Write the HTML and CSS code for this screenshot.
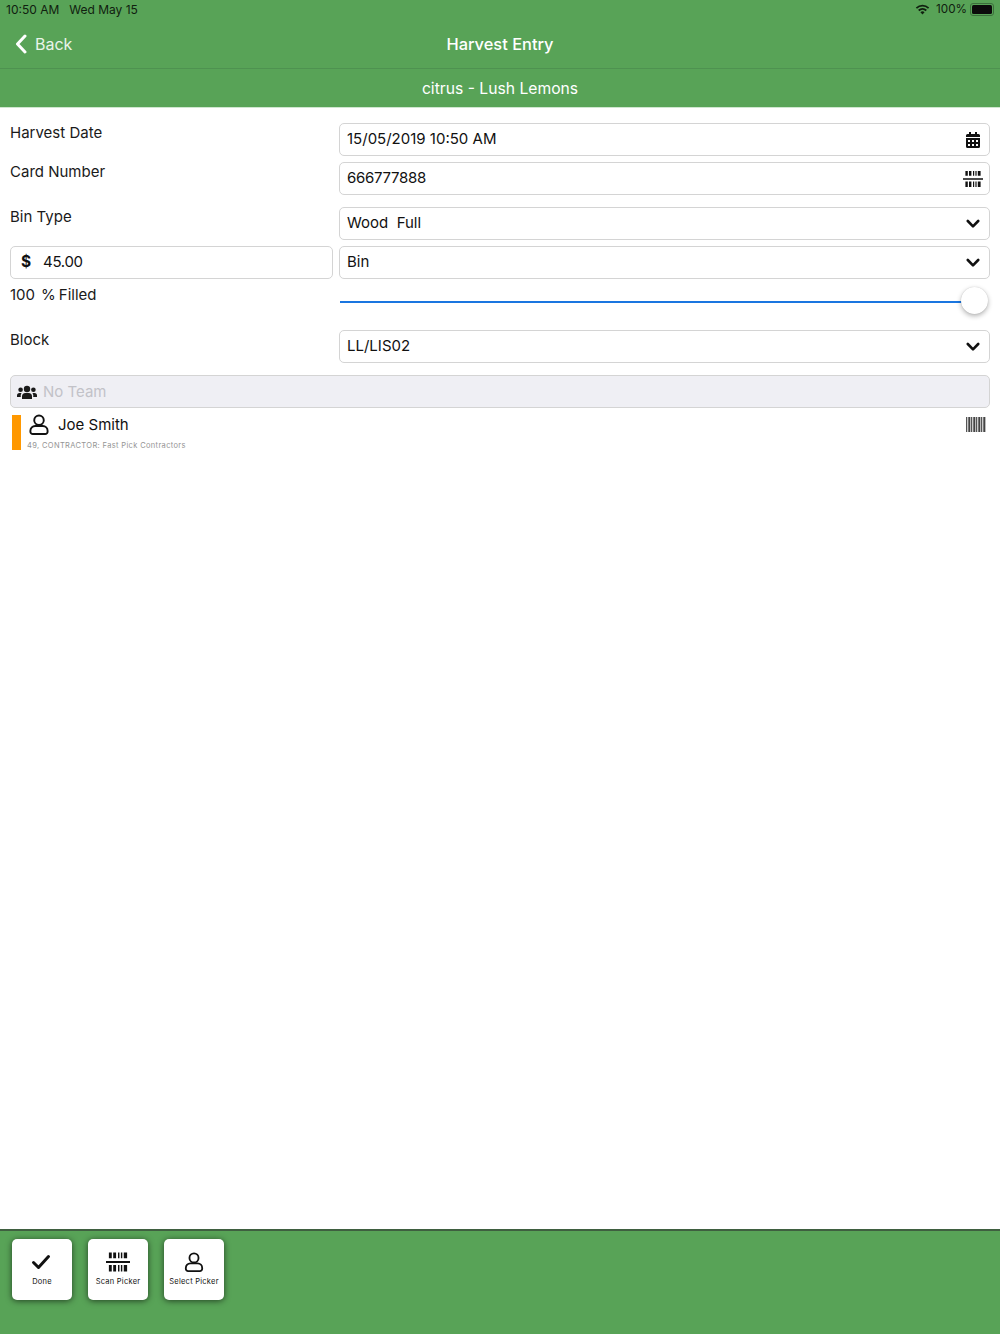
FILE: index.html
```html
<!doctype html>
<html lang="en">

<head>
  <meta charset="utf-8">
  <title>Harvest Entry</title>
  <meta name="viewport" content="width=device-width, initial-scale=1">
  <link rel="stylesheet" href="styles.css">
</head>

<body>
  <svg class="defs" width="0" height="0" aria-hidden="true">
    <symbol id="i-scan" viewBox="0 0 25 20">
      <path d="M3 0h3v6H3zM7.500 0h3v6h-3zM12.500 0H14v6h-1.500zM15.500 0H17v6h-1.500zM18.500 0H22v6h-3.500zM3 13h3v7H3zM7.500 13h3v7h-3zM12.500 13H14v7h-1.500zM15.500 13H17v7h-1.500zM18.500 13H22v7h-3.500zM0 9h25v2H0z"/>
    </symbol>
    <symbol id="i-user" viewBox="0 0 20 22">
      <circle cx="10" cy="6.500" r="5" fill="none" stroke="currentColor" stroke-width="2"/>
      <path d="M6 12.500h8a5 5 0 0 1 5 5v1a2.500 2.500 0 0 1-2.500 2.500h-13A2.500 2.500 0 0 1 1 18.500v-1a5 5 0 0 1 5-5z" fill="#fff" stroke="currentColor" stroke-width="2"/>
    </symbol>
    <symbol id="i-chevron" viewBox="0 0 14 10">
      <path d="M1.800 2 7 7.300 12.200 2" fill="none" stroke="currentColor" stroke-width="2.600" stroke-linecap="round" stroke-linejoin="round"/>
    </symbol>
  </svg>

  <header class="head">
    <div class="status">
      <span class="status-time">10:50 AM</span>
      <span class="status-date">Wed May 15</span>
      <span class="status-right">
        <svg class="wifi" viewBox="0 0 16 12"><path d="M8 11.500 5.700 9a3.300 3.300 0 0 1 4.600 0zM4.500 7.800 3.200 6.400a7 7 0 0 1 9.600 0l-1.300 1.400a5.100 5.100 0 0 0-7 0zM2 5.200.7 3.800a10.700 10.700 0 0 1 14.600 0L14 5.200a8.800 8.800 0 0 0-12 0z"/></svg>
        <span>100%</span>
        <span class="battery"><span class="battery-fill"></span></span>
      </span>
    </div>
    <div class="nav">
      <a class="back">
        <svg class="back-icon" viewBox="0 0 12 20"><path d="M10 2 2.500 10l7.500 8" fill="none" stroke="#fff" stroke-width="3" stroke-linecap="round" stroke-linejoin="round"/></svg>
        Back
      </a>
      <div class="nav-title">Harvest Entry</div>
    </div>
    <div class="sub">citrus - Lush Lemons</div>
  </header>

  <main class="form">
    <div class="row">
      <div class="label">Harvest Date</div>
      <div class="field">15/05/2019 10:50 AM
        <svg class="field-icon cal" viewBox="0 0 14 16"><path d="M3 0h2v2h4V0h2v2h1.500A1.500 1.500 0 0 1 14 3.500V5H0V3.500A1.500 1.500 0 0 1 1.500 2H3zM0 6h14v8.500a1.500 1.500 0 0 1-1.500 1.500h-11A1.500 1.500 0 0 1 0 14.500zm2 2v2h2V8zm4 0v2h2V8zm4 0v2h2V8zm-8 4v2h2v-2zm4 0v2h2v-2zm4 0v2h2v-2z" fill-rule="evenodd"/></svg>
      </div>
    </div>
    <div class="row">
      <div class="label">Card Number</div>
      <div class="field field-num">666777888
        <svg class="field-icon scan"><use href="#i-scan"/></svg>
      </div>
    </div>
    <div class="row row-wide">
      <div class="label">Bin Type</div>
      <div class="field">Wood&nbsp; Full
        <svg class="field-icon chev"><use href="#i-chevron"/></svg>
      </div>
    </div>
    <div class="row">
      <div class="field field-price"><span class="dollar">$</span><span class="price">45.00</span></div>
      <div class="field">Bin
        <svg class="field-icon chev"><use href="#i-chevron"/></svg>
      </div>
    </div>
    <div class="row">
      <div class="label label-fill">100&nbsp; % Filled</div>
      <div class="slider">
        <div class="slider-track"></div>
        <div class="slider-thumb"></div>
      </div>
    </div>
    <div class="row row-wide">
      <div class="label">Block</div>
      <div class="field">LL/LIS02
        <svg class="field-icon chev"><use href="#i-chevron"/></svg>
      </div>
    </div>

    <div class="team">
      <svg class="team-icon" viewBox="0 0 20 14"><circle cx="10" cy="4" r="3.200"/><circle cx="3.600" cy="4.800" r="2.300"/><circle cx="16.400" cy="4.800" r="2.300"/><path d="M5 14v-2.500A3.500 3.500 0 0 1 8.500 8h3a3.500 3.500 0 0 1 3.500 3.500V14zM0 12v-1.500A2.500 2.500 0 0 1 2.500 8h2A5 5 0 0 0 3.800 12zM20 12v-1.500A2.500 2.500 0 0 0 17.500 8h-2a5 5 0 0 1 .7 4z"/></svg>
      No Team
    </div>

    <div class="picker">
      <div class="picker-bar"></div>
      <div class="picker-body">
        <div class="picker-name">
          <svg class="picker-user"><use href="#i-user"/></svg>
          Joe Smith
        </div>
        <div class="picker-info">49, CONTRACTOR: Fast Pick Contractors</div>
      </div>
      <div class="picker-code"></div>
    </div>
  </main>

  <footer class="foot">
    <button class="tool">
      <svg class="tool-icon" viewBox="0 0 24 20"><path d="M3.500 10.500 8.500 15.500 18.500 4.500" fill="none" stroke="currentColor" stroke-width="3" stroke-linecap="round" stroke-linejoin="round"/></svg>
      Done
    </button>
    <button class="tool">
      <svg class="tool-icon"><use href="#i-scan"/></svg>
      Scan Picker
    </button>
    <button class="tool">
      <svg class="tool-icon"><use href="#i-user"/></svg>
      Select Picker
    </button>
  </footer>
</body>

</html>
```

FILE: styles.css
```css
html, body {
    margin: 0;
    height: 100%;
}
body {
    display: flex;
    flex-direction: column;
    height: 1334px;
    overflow: hidden;
    background: #fff;
    color: #1a1a1a;
    font-family: Inter, "Liberation Sans", sans-serif;
    font-size: 15px;
}
.defs {
    position: absolute;
}

/* header */
.head {
    background: #58a357;
    height: 107px;
    flex: none;
    box-shadow: 0 1px 0 #cfe6cf;
}
.status {
    display: flex;
    align-items: center;
    height: 18px;
    padding: 0 6px 2px;
    font-size: 12px;
    color: #10200f;
}
.status-date {
    margin-left: 10px;
}
.status-right {
    margin-left: auto;
    display: flex;
    align-items: center;
    gap: 3px;
    font-size: 11.7px;
}
.wifi {
    width: 15px;
    height: 11px;
    margin-right: 3px;
    fill: #10200f;
}
.battery {
    display: block;
    width: 20px;
    height: 9px;
    padding: 1px;
    border: 1px solid #3c6f3c;
    border-radius: 3px;
}
.battery-fill {
    display: block;
    height: 100%;
    background: #0b0b0b;
    border-radius: 1.5px;
}
.nav {
    display: flex;
    align-items: center;
    justify-content: center;
    position: relative;
    height: 48px;
    border-bottom: 1px solid #4e9250;
    color: #fff;
}
.nav-title {
    font-size: 16.4px;
    font-weight: 500;
}
.back {
    position: absolute;
    left: 15px;
    top: 14px;
    display: flex;
    align-items: center;
    gap: 8px;
    font-size: 16px;
    color: #eaf4ea;
}
.back-icon {
    width: 12px;
    height: 20px;
}
.sub {
    height: 38px;
    line-height: 39px;
    text-align: center;
    color: #fff;
    font-size: 15.7px;
}

/* form */
.form {
    flex: 1;
    padding: 16px 10px 0;
}
.row {
    display: grid;
    grid-template-columns: 323px 651px;
    column-gap: 6px;
    margin-bottom: 6px;
}
.row-wide {
    margin-top: 12px;
}
.label {
    height: 33px;
    line-height: 19px;
}
.label-fill {
    word-spacing: -1.2px;
}
.field {
    position: relative;
    box-sizing: border-box;
    height: 33px;
    line-height: 30px;
    padding-left: 7px;
    border: 1px solid #d4d4d4;
    border-radius: 5px;
    color: #111;
}
.field-num {
    letter-spacing: -.3px;
}
.field-price {
    display: flex;
    padding-left: 10px;
}
.price {
    letter-spacing: -.3px;
}
.dollar {
    width: 22px;
    font-weight: 700;
    font-size: 15.5px;
}
.field-icon {
    position: absolute;
    fill: #111;
    color: #111;
}
.cal {
    width: 14px;
    height: 16px;
    right: 9px;
    top: 8px;
}
.scan {
    width: 20px;
    height: 16px;
    right: 6px;
    top: 8px;
}
.chev {
    width: 14px;
    height: 10px;
    right: 9px;
    top: 11px;
}
.slider {
    position: relative;
    height: 33px;
}
.slider-track {
    position: absolute;
    left: 1px;
    right: 28px;
    top: 16px;
    height: 2px;
    background: #1a76e0;
}
.slider-thumb {
    position: absolute;
    right: 2px;
    top: 2px;
    width: 27px;
    height: 27px;
    border-radius: 50%;
    background: #fff;
    box-shadow: 0 2px 5px rgba(0, 0, 0, .3), 0 0 1px rgba(0, 0, 0, .2);
}
.team {
    display: flex;
    align-items: center;
    box-sizing: border-box;
    height: 33px;
    margin-top: 12px;
    padding-left: 6px;
    background: #efeff4;
    border: 1px solid #d4d4d4;
    border-radius: 5px;
    color: #c2c2c8;
}
.team-icon {
    width: 20px;
    height: 14px;
    margin-right: 6px;
    fill: #1a1a1a;
}

/* picker row */
.picker {
    display: flex;
    margin-top: 6px;
    margin-left: 2px;
    height: 37px;
}
.picker-bar {
    width: 9px;
    margin: 1px 0;
    background: #ff9800;
}
.picker-body {
    flex: 1;
    margin-left: 6px;
}
.picker-name {
    display: flex;
    align-items: center;
    height: 21px;
    color: #111;
}
.picker-user {
    width: 20px;
    height: 21px;
    margin: 0 9px 0 2px;
    color: #111;
}
.picker-info {
    margin-top: 6px;
    font-size: 7.5px;
    letter-spacing: .35px;
    color: #949494;
}
.picker-code {
    width: 20px;
    height: 15px;
    margin: 3px 4px 0 0;
    background: repeating-linear-gradient(90deg, #555 0 1px, #ccc 1px 2px, #777 2px 3px, #444 3px 4px, #bbb 4px 5px);
}

/* bottom toolbar */
.foot {
    flex: none;
    display: flex;
    gap: 16px;
    box-sizing: border-box;
    height: 105px;
    padding: 8px 12px;
    background: #58a357;
    border-top: 2px solid #3f5f40;
}
.tool {
    display: flex;
    flex-direction: column;
    align-items: center;
    box-sizing: border-box;
    width: 60px;
    height: 61px;
    padding: 13px 0 0;
    border: 0;
    border-radius: 5px;
    background: #fff;
    box-shadow: 0 1px 6px rgba(0, 0, 0, .6);
    color: #111;
    fill: #111;
    font-family: inherit;
    font-size: 7.5px;
    letter-spacing: .25px;
}
.tool-icon {
    width: 24px;
    height: 20px;
    margin-bottom: 5px;
}
```
